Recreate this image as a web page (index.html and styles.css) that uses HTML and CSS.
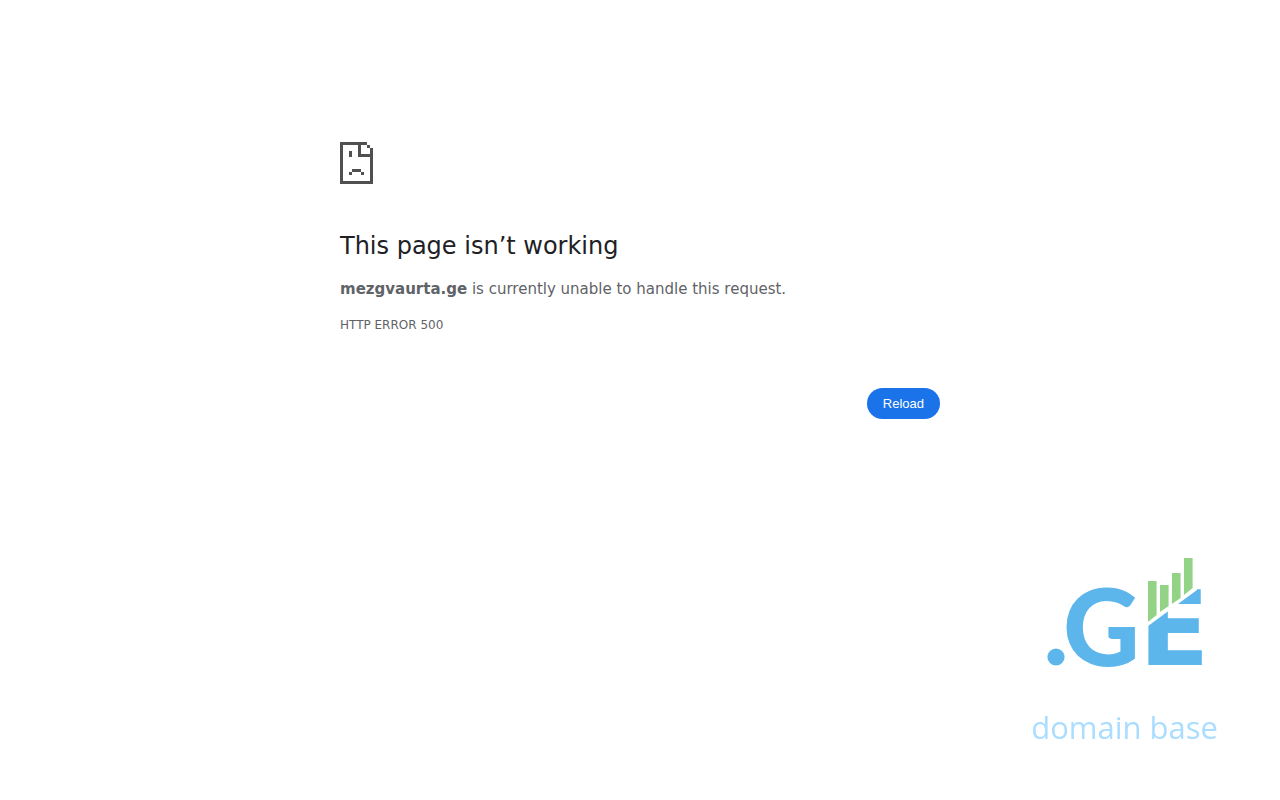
FILE: index.html
```html
<!DOCTYPE html>
<html lang="en">
<head>
    <title>mezgvaurta.ge</title>
    <meta charset="utf-8">
    <meta name="viewport" content="width=device-width, initial-scale=1.0">
    <link rel="stylesheet" href="styles.css">
</head>
<body>
    <!-- Error message -->
    <main class="error">
        <svg class="error-icon" viewBox="0 0 11 14" shape-rendering="crispEdges" aria-hidden="true">
            <path d="M0 0h9v1H7v3h3V3h1v11H0zM1 1v12h9V5H6V1zM9 1h1v1H9zM10 2h1v1h-1zM3 3h1v2H3zM4 9h3v1H4zM3 10h1v1H3zM7 10h1v1H7z" fill-rule="evenodd"/>
        </svg>
        <h1>This page isn’t working</h1>
        <p class="message"><strong>mezgvaurta.ge</strong> is currently unable to handle this request.</p>
        <p class="error-code">HTTP ERROR 500</p>
        <div class="buttons">
            <button type="button" class="reload">Reload</button>
        </div>
    </main>

    <!-- Domain base logo -->
    <footer class="brand">
        <svg class="brand-logo" viewBox="0 0 184 150" role="img" aria-label=".GE">
            <circle class="blue" cx="25" cy="112" r="8.6"/>
            <text class="blue letter letter-g" x="32" y="121">G</text>
            <text class="blue letter" x="108" y="120">E</text>
            <!-- diagonal gap between the E and the chart bars -->
            <path class="gap" d="M113 40V84L166 45V40z"/>
            <path class="green" d="M117 36h8.6v34l-8.6 7zM129 40h8.6v21l-8.6 6zM141 28h8.6v25l-8.6 6zM153 13h8.6v30l-8.6 7z"/>
        </svg>
        <p class="brand-name">domain base</p>
    </footer>
</body>
</html>
```

FILE: styles.css
```css
/* General styles */
body {
    font-family: 'DejaVu Sans', sans-serif;
    margin: 0;
    color: #5f6368;
    background: #fff;
    font-size: 15px;
    line-height: 24px;
}

/* Error message */
.error {
    max-width: 600px;
    margin: 0 auto;
    padding: 142px 24px 0;
}

.error-icon {
    display: block;
    width: 33px;
    height: 42px;
    margin-bottom: 47px;
    fill: #505050;
}

h1 {
    margin: 0 0 16px;
    font-size: 24px;
    font-weight: 500;
    line-height: 30px;
    color: #202124;
}

.message {
    margin: 0 0 12px;
}

.error-code {
    margin: 0;
    font-size: 12px;
}

.buttons {
    display: flex;
    justify-content: flex-end;
    margin-top: 51px;
}

.reload {
    padding: 8px 16px;
    border: 0;
    border-radius: 16px;
    background: #1a73e8;
    color: #fff;
    font-family: 'Liberation Sans', Arial, sans-serif;
    font-size: 13px;
    line-height: 15px;
    cursor: pointer;
}

/* Logo pinned to the corner */
.brand {
    position: fixed;
    right: 62px;
    bottom: 49px;
}

.brand-logo {
    display: block;
    width: 184px;
    height: 150px;
}

.brand-name {
    margin: 8px 0 0;
    font-family: 'Open Sans', sans-serif;
    font-size: 31px;
    line-height: 48px;
    color: #aaddff;
}

.blue {
    fill: #5cb6ec;
}

.green {
    fill: #92d386;
}

.gap {
    fill: #fff;
}

.letter {
    font-family: 'DejaVu Sans', sans-serif;
    font-size: 103px;
    font-weight: bold;
}

.letter-g {
    font-family: Lato, sans-serif;
    font-size: 106px;
    font-weight: 900;
}
```
